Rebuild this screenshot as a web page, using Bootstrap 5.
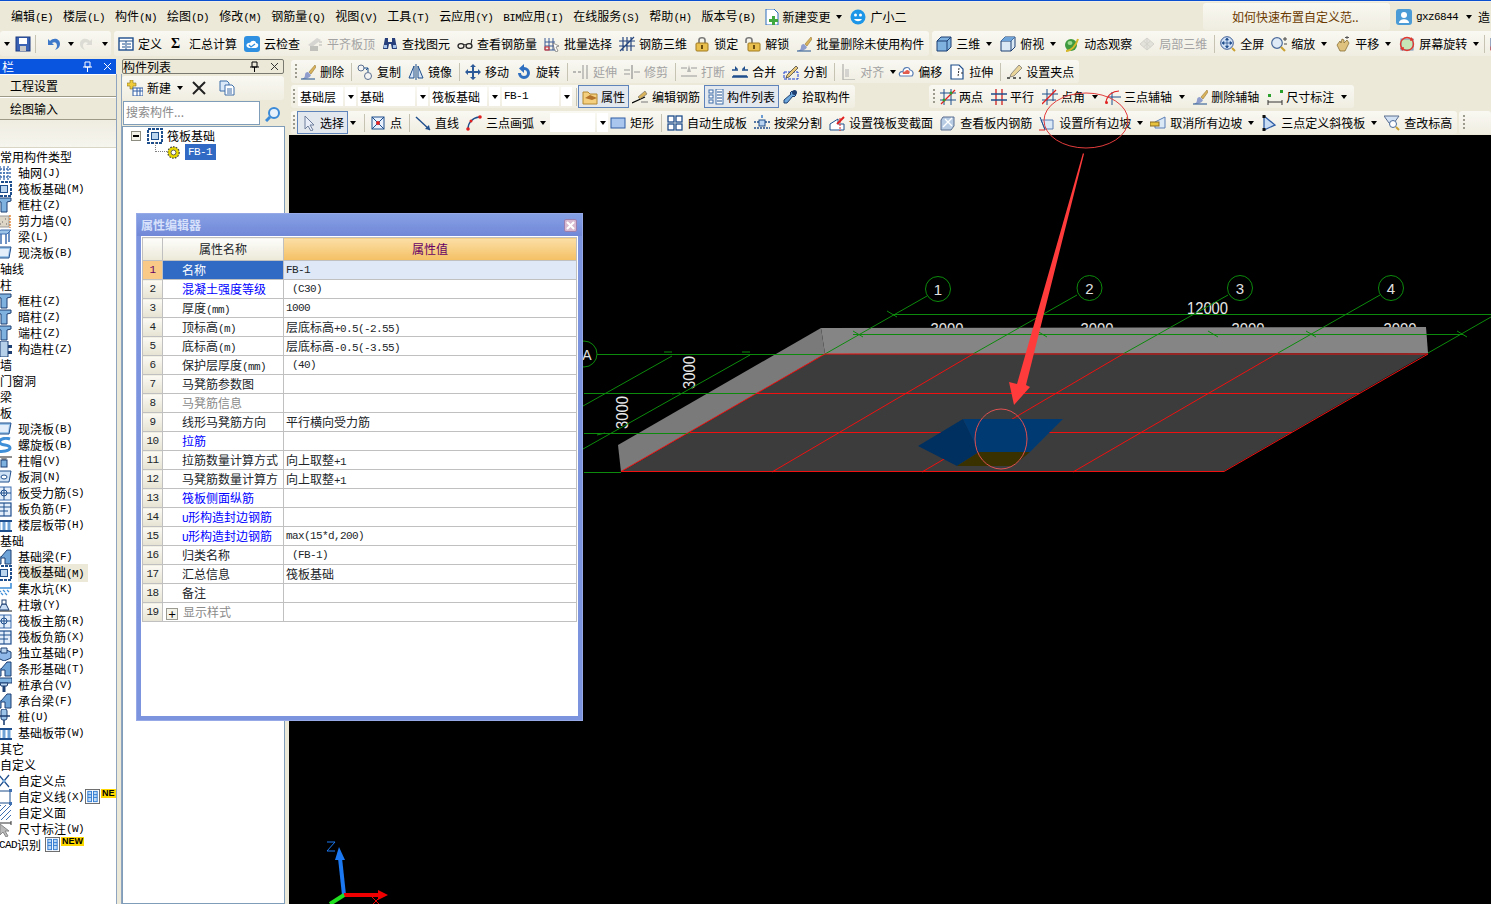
<!DOCTYPE html>
<html lang="zh-CN">
<head>
<meta charset="UTF-8" />
<title>筏板基础 - 属性编辑器</title>
<link href="https://cdn.jsdelivr.net/npm/bootstrap@5.3.0/dist/css/bootstrap.min.css" rel="stylesheet" />
<style>
  html, body { margin: 0; height: 100%; overflow: hidden; background: #ece9d8; }
  body { font: 12px/16px "Noto Sans CJK SC", "Liberation Sans", sans-serif; color: #000; }
  .app-root { position: relative; width: 1491px; height: 904px; overflow: hidden; background: #ece9d8; }
  .hk { font: 11px/16px "Liberation Mono", monospace; letter-spacing: -.6px; }
  .lat { font: 11px/16px "Liberation Mono", monospace; letter-spacing: -.6px; }

  /* menu */
  .top-line { height: 2px; background: linear-gradient(#0a4fd0 50%, #f2f0e6 50%); flex: none; }
  .menu-row { height: 29px; flex: none; padding-left: 6px; white-space: nowrap; }
  .menu-it { padding: 0 5px; }
  .tip-box { width: 187px; height: 27px; margin-left: auto; margin-right: 6px; padding-left: 29px; line-height: 27px; color: #6b3a00; background: linear-gradient(#f9f8f1, #efede0); border-radius: 3px; }
  .user-box { width: 95px; flex: none; gap: 4px; }

  /* toolbars */
  .tb-row { height: 25px; flex: none; white-space: nowrap; gap: 3px; overflow: hidden; }
  .tb-grp { height: 100%; flex: none; background: linear-gradient(#f9f8f2, #f0eee2); border-radius: 3px; }
  .tb-grp > :last-child { margin-right: 5px; }
  .tb-first { width: 111px; overflow: hidden; }
  .it { display: inline-flex; align-items: center; gap: 4px; margin-right: 7px; flex: none; }
  .it-g2 { gap: 2px; }
  .ic { width: 16px; height: 16px; flex: none; display: block; }
  .off { color: #a3a3a3; }
  .off .ic { opacity: .55; }
  .dn { width: 0; height: 0; flex: none; border: 3.5px solid transparent; border-top: 4px solid #000; border-bottom: 0; margin: 0 8px 0 -1px; }
  .dn.dn-s { margin-right: 5px; }
  .dn.dn-t { margin-right: 2px; }
  .sp { width: 1px; height: 18px; flex: none; background: #c6c3b2; margin: 0 5px 0 0; }
  .sp-cmb { margin: 0 1px 0 2px; }
  .hd { width: 2px; height: 16px; flex: none; margin: 0 3px 0 4px; background: repeating-linear-gradient(#9d9b8e 0 2px, transparent 2px 4px); }
  .hd-n { margin: 0 3px 0 2px; }
  .hd-w { margin-right: 5px; }
  .hd-c { margin: 0 2px 0 2px; }
  .hl { height: 23px; padding: 0 3px; margin-right: 3px; gap: 3px; background: #e3e7ee; border: 1px solid #5f83bb; }
  .hl-r { margin-right: 4px; }
  .sum-sign { width: 10px; font: bold 14px/16px "Liberation Serif", serif; margin-left: 2px; margin-right: 4px; }

  .tb-stack { flex: none; padding: 4px 0 0 2px; }
  .tb-a, .tb-b, .tb-c { height: 23px; white-space: nowrap; overflow: hidden; gap: 0; }
  .tb-b { margin-top: 2px; }
  .tb-c { margin-top: 3px; margin-bottom: 1px; }
  .tb-c .dn { margin-right: 7px; }
  .tb-c .dn.dn-w { margin-right: 8px; }
  .tb-c .dn.dn-t { margin-right: 4px; }
  .tb-far { margin-left: 74px; }
  .g3 .it { gap: 3px; margin-right: 8px; }
  .g3 .dn { margin-right: 7px; }
  .tb-tail { margin-left: 2px; width: 32px; }
  .cmb { display: flex; height: 19px; margin-right: 2px; flex: none; }
  .cmb-f { background: #fff; padding-left: 2px; line-height: 19px; margin-right: 2px; }
  .cmb-a { width: 11px; background: #fff; display: flex; align-items: center; justify-content: center; }
  .cmb-a .dn, .tb-c .cmb-a .dn { margin: 0; }
  .w45 { width: 45px; }
  .w58 { width: 57px; }

  /* left panels */
  .side-l { width: 116px; flex: none; padding-top: 3px; overflow: hidden; }
  .pane-hd { height: 15px; display: flex; align-items: center; flex: none; white-space: nowrap; overflow: hidden; }
  .pane-blue { background: #0a55e0; color: #fff; padding-left: 2px; }
  .pane-gray { border: 1px solid #7a7a70; background: #ece9d8; border-radius: 2px; margin-right: 1px; }
  .pin { margin-left: auto; display: flex; gap: 9px; padding-right: 3px; }
  .pin svg { width: 11px; height: 11px; display: block; }
  .side-btn { display: block; width: 100%; height: 23px; padding: 0 0 0 10px; font-size: 12px; line-height: 21px; text-align: left; border: 0; border-bottom: 1px solid #9d9a88; border-top: 1px solid #fff; border-radius: 0; background: #ece9d8; color: #000; }
  .side-fill { height: 28px; background: linear-gradient(#efede1, #f6f5ee); border-bottom: 1px solid #d8d5c4; }
  .type-list { background: #fff; height: 760px; padding-top: 1px; margin: 0; overflow: hidden; }
  .type-row { height: 16px; display: flex; align-items: center; white-space: nowrap; }
  .type-row .ic { margin-left: -4px; margin-right: 6px; }
  .type-on { background: #ece9d8; width: 70px; }
  .new-tag { display: inline-block; height: 9px; padding: 0 1px; overflow: hidden; background: #ffd800; font: bold 9px/9px "Liberation Sans", sans-serif; align-self: flex-start; }
  .col3 { width: 15px; height: 15px; margin: 0 1px 0 1px; flex: none; }
  .cad-row { margin-left: -1px; }

  .split-v { width: 6px; flex: none; background: #ece9d8; border-left: 1px solid #8fa5bf; border-right: 1px solid #8fa5bf; margin-top: 18px; }
  .side-m { width: 163px; flex: none; padding-top: 3px; }
  .side-gap { width: 4px; flex: none; background: #ece9d8; }
  .new-bar { height: 24px; margin-top: 2px; padding-left: 5px; background: linear-gradient(#f9f8f2, #f0eee2); border-radius: 3px; margin-right: 1px; flex: none; }
  .search-row { height: 25px; gap: 2px; margin: 1px 1px 0 1px; flex: none; }
  .search-in { width: 137px; height: 24px; border: 1px solid #7f9db9; background: #fff; color: #8a8a8a; padding: 0 2px 3px; line-height: 16px; border-radius: 0; font-size: 12px; }
  .search-btn { width: 22px; display: flex; align-items: center; justify-content: center; }
  .tree-box { flex-grow: 1; background: #fff; border: 1px solid #7f9db9; position: relative; }
  .tree-line { height: 16px; display: flex; align-items: center; white-space: nowrap; }
  .tree-root { padding: 0 0 0 8px; height: 17px; }
  .tree-sign { width: 10px; height: 10px; border: 1px solid #8c8c80; background: #f4f3ea; margin-right: 6px; position: relative; flex: none; }
  .tree-sign::after { content: ""; position: absolute; left: 1px; right: 1px; top: 3px; height: 2px; background: #000; }
  .tree-leaf { padding-left: 44px; gap: 5px; }
  .tree-leaf .ic { width: 13px; height: 13px; }
  .tree-on { background: #316ac5; color: #fff; padding: 0 2px 0 3px; height: 16px; width: 31px; line-height: 16px; }
  .tree-dots { position: absolute; left: 32px; top: 15px; width: 12px; height: 10px; border-left: 1px dotted #808080; border-bottom: 1px dotted #808080; }
  .main-col { flex: 1 1 0; min-width: 0; }
  .cad-view { flex: 1 1 0; background: #000; min-height: 0; }
  .cad-view svg { display: block; }

  /* property dialog, floats over the view */
  .prop-dlg { position: absolute; left: 136px; top: 213px; width: 447px; height: 508px; border: 0; border-radius: 0; background: #7c93dd; box-shadow: inset 0 0 0 1px #97a9e6; padding: 0 5px 5px; z-index: 5; }
  .prop-title { height: 22px; display: flex; align-items: center; background: linear-gradient(#86a0e4, #7188d8); margin: 1px -4px 0; padding: 0 4px; color: #d6e0fa; font-weight: 700; font-size: 12px; flex: none; }
  .prop-x { width: 13px; height: 13px; margin-left: auto; margin-right: 1px; background: #d8b9cf; border: 1px solid #9b7fae; border-radius: 2px; display: flex; align-items: center; justify-content: center; }
  .prop-body { background: #fff; flex-grow: 1; padding: 1px 0 0 1px; }
  .prop-tb { table-layout: fixed; width: 435px; font-size: 12px; --bs-table-border-color: #c0c0c0; --bs-border-color: #c0c0c0; border-color: #c0c0c0; }
  .prop-tb > :not(caption) > * > * { padding: 0; height: 19px; line-height: 14px; white-space: nowrap; overflow: hidden; box-shadow: none; vertical-align: middle; }
  .prop-tb .lat, .prop-tb .hk { line-height: 12px; }
  .prop-tb thead th { height: 23px; font-weight: 400; text-align: center; border-top-width: 1px; background: linear-gradient(#fdfdfb, #ece9d8); }
  .prop-tb thead th.val-head { background: linear-gradient(#fbdfa6, #f4c063); color: #660066; }
  .prop-tb td.idx { text-align: center; background: linear-gradient(#fbfaf4, #e6e3d3); }
  .prop-tb td.idx-on { background: #f8c987; color: #660066; }
  .prop-tb td.nm { padding-left: 19px; }
  .prop-tb td.nm-on { background: #316ac5; color: #fff; }
  .prop-tb td.vl { padding-left: 2px; }
  .prop-tb td.vl-on { background: #dfe8f6; }
  .prop-tb .lnk { color: #0000ff; }
  .prop-tb .dim { color: #8a8a8a; }
  .plus-box { display: inline-block; width: 12px; height: 12px; margin: 0 5px 0 -16px; border: 1px solid #9a9a90; background: #f4f3ea; line-height: 10px; text-align: center; vertical-align: -2px; font-size: 13px; color: #000; }
  .anno-layer { position: absolute; left: 0; top: 0; z-index: 8; pointer-events: none; }
</style>
</head>
<body>

<svg width="0" height="0" class="position-absolute">
  <defs>
    <symbol id="save" viewBox="0 0 16 16"><rect x="1" y="1" width="14" height="14" fill="#3a62b5" stroke="#1c3a80"/><rect x="4" y="2" width="8" height="6" fill="#fff"/><rect x="5" y="10" width="6" height="5" fill="#c8c8c8"/></symbol>
    <symbol id="undo" viewBox="0 0 16 16"><path d="M3 3v6h6L7 7c3-2 5 0 5 3 0 1-1 3-2 4 3-1 5-3 5-6 0-5-6-7-10-3z" fill="#3e78c8"/></symbol>
    <symbol id="redo" viewBox="0 0 16 16"><path d="M13 3v6H7l2-2c-3-2-5 0-5 3 0 1 1 3 2 4-3-1-5-3-5-6 0-5 6-7 10-3z" fill="#c9c9c4"/></symbol>
    <symbol id="defn" viewBox="0 0 16 16"><rect x="1" y="2" width="14" height="12" fill="#fff" stroke="#1f4e8c" stroke-width="1.4"/><path d="M1 5h14M4 8h3M4 11h3M9 8h4M9 11h4M8 5v9" stroke="#1f4e8c"/></symbol>
    <symbol id="cloud" viewBox="0 0 16 16"><rect x="0" y="0" width="16" height="16" rx="3" fill="#2f8fe0"/><path d="M3 11c-2-3 2-5 3-4 1-3 6-3 6 0 3 0 3 4 0 5H5z" fill="#fff"/><path d="M5 9l2 2 4-3" stroke="#2f8fe0" fill="none" stroke-width="1.3"/></symbol>
    <symbol id="flat" viewBox="0 0 16 16"><path d="M1 9l9-7 4 2-9 7z" fill="#bdbdbd"/><path d="M3 10v5h8v-5" fill="#9a9a9a"/><path d="M12 6h3M12 9h3" stroke="#8a8a8a"/></symbol>
    <symbol id="bino" viewBox="0 0 16 16"><path d="M3 2h3v4h4V2h3l2 11h-5l-1-5H7l-1 5H1z" fill="#27407c"/><rect x="2" y="9" width="3" height="3" fill="#a7c4ea"/><rect x="11" y="9" width="3" height="3" fill="#a7c4ea"/></symbol>
    <symbol id="glass" viewBox="0 0 16 16"><ellipse cx="4" cy="10" rx="3" ry="2.4" fill="none" stroke="#222" stroke-width="1.3"/><ellipse cx="12" cy="10" rx="3" ry="2.4" fill="none" stroke="#222" stroke-width="1.3"/><path d="M7 9c1-1 1-1 2 0M14 8l1-5" stroke="#222" fill="none"/></symbol>
    <symbol id="bsel" viewBox="0 0 16 16"><path d="M1 2v12h10M1 6h10M1 10h10M5 2v12M9 2v12" stroke="#3a5a94" fill="none"/><path d="M9 7l6 3-3 1 2 4-2 1-2-4z" fill="#fff" stroke="#555" stroke-width=".6"/><rect x="1" y="11" width="4" height="3" fill="none" stroke="#d33"/></symbol>
    <symbol id="bar3" viewBox="0 0 16 16"><path d="M4 1v14M8 1v14M12 1v14M0 5h16M0 10h16M1 15l14-14" stroke="#25457e" fill="none" stroke-width="1.2"/></symbol>
    <symbol id="lock" viewBox="0 0 16 16"><path d="M5 7V4c0-3 6-3 6 0v3" fill="none" stroke="#777" stroke-width="1.6"/><rect x="2" y="7" width="12" height="8" rx="1" fill="#e9bf4e" stroke="#a07a20"/><rect x="7" y="9" width="2" height="4" fill="#6a4d10"/></symbol>
    <symbol id="unlock" viewBox="0 0 16 16"><path d="M1 7V4c0-3 6-3 6 0v3" fill="none" stroke="#777" stroke-width="1.6"/><rect x="3" y="7" width="12" height="8" rx="1" fill="#e9bf4e" stroke="#a07a20"/><rect x="8" y="9" width="2" height="4" fill="#6a4d10"/></symbol>
    <symbol id="brush" viewBox="0 0 16 16"><path d="M15 1l-6 7 2 2 5-7z" fill="#d9b25c" stroke="#8a6a24" stroke-width=".5"/><path d="M8 8l3 3c-1 3-5 4-9 4 2-1 3-2 3-4 0-2 1-3 3-3z" fill="#8f9dcc"/><path d="M1 15h14" stroke="#1f4e8c"/></symbol>
    <symbol id="cube" viewBox="0 0 16 16"><path d="M1 5l4-4h10v10l-4 4H1z" fill="#7fb2df" stroke="#1d3f72"/><path d="M1 5h10v10M11 5l4-4" fill="none" stroke="#1d3f72"/></symbol>
    <symbol id="top" viewBox="0 0 16 16"><path d="M1 5l4-4h10v10l-4 4H1z" fill="#dbe9f5" stroke="#1d3f72"/><path d="M1 5h10v10M11 5l4-4" fill="none" stroke="#1d3f72"/><path d="M5 1h10L11 5H1z" fill="#6ea3d8"/></symbol>
    <symbol id="orbit" viewBox="0 0 16 16"><circle cx="7" cy="9" r="6" fill="#3f9a3f"/><ellipse cx="6" cy="7" rx="2.5" ry="2" fill="#9ddc8f"/><path d="M2 15c5 0 10-5 12-12" fill="none" stroke="#d4b72b" stroke-width="2"/></symbol>
    <symbol id="loc3" viewBox="0 0 16 16"><path d="M1 8l7-6 7 6-7 6z" fill="#d5d5d0" stroke="#b9b9b4"/><path d="M4.500 5l7 6M11.500 5l-7 6M8 2v12" stroke="#b9b9b4"/></symbol>
    <symbol id="zfull" viewBox="0 0 16 16"><circle cx="7" cy="7" r="6.300" fill="#cfe0f4" stroke="#3b5a94"/><path d="M7 2v10M2 7h10M7 2L5.500 4h3zM7 12l-1.500-2h3zM2 7l2-1.500v3zM12 7l-2-1.500v3z" stroke="#1f4e8c" fill="#1f4e8c" stroke-width=".7"/><path d="M12 12l3 3" stroke="#caa233" stroke-width="2"/></symbol>
    <symbol id="zoom" viewBox="0 0 16 16"><circle cx="6" cy="7" r="5.300" fill="#dfeaf7" stroke="#4a6a9a" stroke-width="1.200"/><path d="M10 11l4 4" stroke="#caa233" stroke-width="2.200"/><path d="M12 3h4M14 1v4M13 8h3" stroke="#444"/></symbol>
    <symbol id="pan" viewBox="0 0 16 16"><path d="M2 9l3-4 1 2 1-4 2 1v3l3-3 2 3-2 4-2 4H5z" fill="#e0c27f" stroke="#7d6326" stroke-width=".7"/><path d="M12 3V0M10 1.500h4" stroke="#555"/></symbol>
    <symbol id="srot" viewBox="0 0 16 16"><rect x="2" y="3" width="12" height="11" fill="#c7e7b6" stroke="#6c8db8"/><circle cx="8" cy="8" r="6.500" fill="none" stroke="#e03a30" stroke-width="1.400"/><path d="M12 1l3 3-4 1zM4 15l-3-3 4-1z" fill="#e03a30"/></symbol>
    <symbol id="copy2" viewBox="0 0 16 16"><circle cx="4" cy="4" r="3" fill="#f4f4f4" stroke="#5a6f8f"/><circle cx="11" cy="12" r="3.500" fill="#f4f4f4" stroke="#5a6f8f"/><path d="M7 4h4v4M9 6l2-2" fill="none" stroke="#1f4e8c"/></symbol>
    <symbol id="mirror" viewBox="0 0 16 16"><path d="M6 2L1 14h5zM10 2l5 12h-5z" fill="#d9e6f5" stroke="#1f4e8c"/><path d="M8 0v16" stroke="#1f4e8c"/></symbol>
    <symbol id="move" viewBox="0 0 16 16"><path d="M8 0l3 3H9v4h4V5l3 3-3 3V9H9v4h2l-3 3-3-3h2V9H3v2L0 8l3-3v2h4V3H5z" fill="#2d5a98"/></symbol>
    <symbol id="rot" viewBox="0 0 16 16"><path d="M8 3a6 6 0 1 1-6 6h3a3 3 0 1 0 3-3v3L3 4.500 8 0z" fill="#2f6fc0"/></symbol>
    <symbol id="ext" viewBox="0 0 16 16"><path d="M0 8h3M5 8h3" stroke="#888" stroke-width="2"/><path d="M10 1v14M14 1v14" stroke="#888" stroke-width="1.600"/></symbol>
    <symbol id="trim" viewBox="0 0 16 16"><path d="M0 6h6M0 10h6M10 8h6" stroke="#888" stroke-width="1.600"/><path d="M8 1v14" stroke="#888" stroke-width="2"/></symbol>
    <symbol id="brk" viewBox="0 0 16 16"><path d="M0 4h6M10 4h6M0 12h16" stroke="#888" stroke-width="1.600"/><path d="M8 1L6 8h4z" fill="#888"/></symbol>
    <symbol id="join" viewBox="0 0 16 16"><path d="M0 13h16M0 6h6M10 6h6M1 12h14" stroke="#1f4e8c" stroke-width="1.300"/><path d="M3 2l3 3-3 1zM13 2l-3 3 3 1z" fill="#1f4e8c"/></symbol>
    <symbol id="cut" viewBox="0 0 16 16"><rect x="1" y="8" width="14" height="7" fill="none" stroke="#1d3fd0" stroke-dasharray="3 1"/><path d="M4 11l9-9 2 2-9 9-3 1z" fill="#e6c676" stroke="#333" stroke-width=".7"/></symbol>
    <symbol id="algn" viewBox="0 0 16 16"><path d="M3 0v16h12" stroke="#888" fill="none" stroke-width="1.400"/><rect x="5" y="5" width="4" height="8" fill="#bbb"/></symbol>
    <symbol id="offs" viewBox="0 0 16 16"><path d="M2 12c-2-3 1-5 3-4 0-5 6-6 7-2 3 0 4 4 2 6z" fill="#fff" stroke="#5a7fb5" stroke-width="1.200"/><path d="M5 10c-1-2 1-3 2-2 0-2 3-3 4-1 1 0 1 2 0 3z" fill="#e35d4f"/></symbol>
    <symbol id="strch" viewBox="0 0 16 16"><path d="M2 1h8l4 4v10H2z" fill="#fff" stroke="#1f4e8c" stroke-width="1.200"/><path d="M10 4l-1 9M12 9h3" stroke="#333" stroke-dasharray="2 1"/></symbol>
    <symbol id="grip" viewBox="0 0 16 16"><path d="M1 14h3M7 14h3M13 14h2" stroke="#333" stroke-width="1.500"/><path d="M5 10L13 1l3 3-8 8-4 1z" fill="#e9d49a" stroke="#555" stroke-width=".6"/></symbol>
    <symbol id="attr" viewBox="0 0 16 16"><path d="M1 3h5l2 2h7v10H1z" fill="#f3cf7f" stroke="#b48830"/><path d="M3 9l5-3 7 3-5 2z" fill="#b4732a"/></symbol>
    <symbol id="ebar" viewBox="0 0 16 16"><path d="M0 14L13 8" stroke="#000" stroke-width="1.200"/><path d="M6 8l7-6 2 3-7 5z" fill="#d9b25c" stroke="#555" stroke-width=".5"/><path d="M9 13h7" stroke="#777"/></symbol>
    <symbol id="lsti" viewBox="0 0 16 16"><rect x="1" y="1" width="4" height="3" fill="#fff" stroke="#3f6fa8"/><rect x="1" y="6" width="4" height="3" fill="#fff" stroke="#3f6fa8"/><rect x="1" y="11" width="4" height="3" fill="#fff" stroke="#3f6fa8"/><rect x="8" y="0" width="7" height="15" fill="#fff" stroke="#3f6fa8"/><path d="M9 3h5M9 6h5M9 9h5M9 12h5" stroke="#1f4e8c"/></symbol>
    <symbol id="drop" viewBox="0 0 16 16"><path d="M10 2l4 4-2 2-1-1-6 7H2v-3l7-6-1-1z" fill="#6fa8dc" stroke="#1d3f72"/><circle cx="12.500" cy="3.500" r="2.500" fill="#1d3f72"/></symbol>
    <symbol id="twop" viewBox="0 0 16 16"><path d="M4 0v16M11 0v16M0 4h16M0 11h16" stroke="#1f4e8c"/><path d="M1 15L15 1" stroke="#e02020" stroke-width="1.200"/><circle cx="11" cy="4" r="1.500" fill="#2ca02c"/><circle cx="4" cy="11" r="1.500" fill="#2ca02c"/></symbol>
    <symbol id="para" viewBox="0 0 16 16"><path d="M5 0v16M11 0v16" stroke="#d02020" stroke-width="1.300"/><path d="M0 5h16M0 11h16" stroke="#1f4e8c" stroke-width="1.300"/></symbol>
    <symbol id="angl" viewBox="0 0 16 16"><path d="M5 0v16M11 0v12M0 5h16M0 11h14" stroke="#1f4e8c"/><path d="M0 15L14 1" stroke="#e02020" stroke-width="1.300"/></symbol>
    <symbol id="thrp" viewBox="0 0 16 16"><path d="M7 3v13M3 8h13" stroke="#1f4e8c"/><path d="M1 13C2 6 8 2 14 2" fill="none" stroke="#e02020" stroke-width="1.200"/><circle cx="1.500" cy="13.500" r="1.500" fill="#e02020"/></symbol>
    <symbol id="dims" viewBox="0 0 16 16"><path d="M1 13h14M1 11v5M15 11v5" stroke="#333"/><rect x="13" y="1" width="3" height="3" fill="#2ca02c"/><rect x="1" y="5" width="3" height="3" fill="#2ca02c"/></symbol>
    <symbol id="curs" viewBox="0 0 16 16"><path d="M4 1v13l3-3 3 5 2-1-3-5h4z" fill="#e9eef8" stroke="#6f7f9c"/></symbol>
    <symbol id="pnt" viewBox="0 0 16 16"><rect x="2" y="2" width="12" height="12" fill="#e8f0fb" stroke="#1f4e8c"/><path d="M2 2l12 12M14 2L2 14" stroke="#1f4e8c"/><circle cx="8" cy="8" r="2" fill="#e02020"/></symbol>
    <symbol id="line" viewBox="0 0 16 16"><path d="M1 2l14 13" stroke="#1f4e8c" stroke-width="1.400"/><path d="M15 15l-5-1 4-4z" fill="#1f4e8c"/></symbol>
    <symbol id="arc" viewBox="0 0 16 16"><path d="M2 14C2 8 6 3 13 2" fill="none" stroke="#1f4e8c" stroke-width="1.400"/><circle cx="2" cy="14" r="1.800" fill="#e02020"/><circle cx="14" cy="2" r="1.800" fill="#e02020"/><circle cx="5" cy="6" r="1.500" fill="#e02020"/></symbol>
    <symbol id="rct" viewBox="0 0 16 16"><rect x="1" y="3" width="14" height="10" fill="#a9c6ee" stroke="#2f5da5"/></symbol>
    <symbol id="auto" viewBox="0 0 16 16"><rect x="1" y="1" width="6" height="6" fill="#fff" stroke="#1f4e8c" stroke-width="1.300"/><rect x="9" y="1" width="6" height="6" fill="#fff" stroke="#1f4e8c" stroke-width="1.300"/><rect x="1" y="9" width="6" height="6" fill="#fff" stroke="#1f4e8c" stroke-width="1.300"/><rect x="9" y="9" width="6" height="6" fill="#fff" stroke="#1f4e8c" stroke-width="1.300"/></symbol>
    <symbol id="bmsp" viewBox="0 0 16 16"><path d="M0 7h5M11 7h5M0 13h16" stroke="#1f4e8c" stroke-width="1.300" stroke-dasharray="2 1"/><rect x="5" y="5" width="6" height="6" fill="#b9d4f1" stroke="#1f4e8c"/><path d="M8 0v3" stroke="#6b9bd2" stroke-width="2"/></symbol>
    <symbol id="vsec" viewBox="0 0 16 16"><path d="M1 9l8-5v5h6v6H1z" fill="#fff" stroke="#1f4e8c"/><path d="M8 9l7-7" stroke="#e02020" stroke-width="2"/><path d="M11 3v13" stroke="#e02020" stroke-dasharray="2 1"/></symbol>
    <symbol id="vbar" viewBox="0 0 16 16"><path d="M3 2h11v9l-3 4H1V5z" fill="#b7cbe3" stroke="#5a6f8f"/><path d="M3 12l9-9M5 4l7 7" stroke="#fff" stroke-width="1.400"/></symbol>
    <symbol id="slop" viewBox="0 0 16 16"><path d="M2 5l12 0v9H6z" fill="#dbe8f6" stroke="#5a7fb5"/><path d="M1 2l5 13" stroke="#1f4e8c"/><path d="M0 15h6" stroke="#e02020"/></symbol>
    <symbol id="csl" viewBox="0 0 16 16"><path d="M5 7l10-5v11H5z" fill="#dbe8f6" stroke="#5a7fb5"/><rect x="0" y="7" width="9" height="4" fill="#e6c23d" stroke="#8a6a24"/></symbol>
    <symbol id="tri3" viewBox="0 0 16 16"><path d="M3 1v14l11-5z" fill="#c8dcf3" stroke="#2f5da5" stroke-width="1.300"/><rect x="1.500" y="0" width="3" height="3" fill="#111"/><rect x="1.500" y="13" width="3" height="3" fill="#111"/></symbol>
    <symbol id="elev" viewBox="0 0 16 16"><path d="M0 1h15l-5 7H5z" fill="#d2e1f3" stroke="#5a6f8f"/><circle cx="9" cy="9" r="3.500" fill="#fff" stroke="#4a6a9a"/><path d="M12 12l3 3" stroke="#caa233" stroke-width="2"/></symbol>
    <symbol id="addn" viewBox="0 0 16 16"><path d="M3 0h3v3h3v3H6v3H3V6H0V3h3z" fill="#f0cc3a" stroke="#8a7420" stroke-width=".6"/><rect x="6" y="8" width="10" height="8" fill="#fff" stroke="#2f5da5"/><path d="M6 11h10M10 8v8M13 8v8" stroke="#2f5da5"/></symbol>
    <symbol id="dcpy" viewBox="0 0 16 16"><path d="M1 1h7l2 2v8H1z" fill="#dbe8f8" stroke="#3f6fa8"/><path d="M6 5h7l2 2v8H6z" fill="#fff" stroke="#3f6fa8"/><path d="M8 9h5M8 11h5M8 13h5" stroke="#3f6fa8"/></symbol>
    <symbol id="find" viewBox="0 0 16 16"><circle cx="9" cy="7" r="5" fill="#e6f1fc" stroke="#3a8ad8" stroke-width="2"/><path d="M5 11l-4 4" stroke="#3a8ad8" stroke-width="3"/></symbol>
    <symbol id="newf" viewBox="0 0 16 16"><path d="M2 0h8l4 4v12H2z" fill="#fff" stroke="#2f6fc0"/><path d="M8 7h3v3h3v3h-3v3H8v-3H5v-3h3z" fill="#3fa83f"/></symbol>
    <symbol id="gxe" viewBox="0 0 16 16"><circle cx="8" cy="8" r="7.500" fill="#1e96e8"/><circle cx="5.500" cy="6" r="1.500" fill="#fff"/><circle cx="10.500" cy="6" r="1.500" fill="#fff"/><path d="M4 10c2 3 6 3 8 0" fill="#fff"/></symbol>
    <symbol id="usr" viewBox="0 0 16 16"><rect width="16" height="16" rx="3" fill="#4a9bd6"/><circle cx="8" cy="6" r="3" fill="#fff"/><path d="M3 14c0-5 10-5 10 0z" fill="#fff"/></symbol>
    <symbol id="gear" viewBox="0 0 16 16"><circle cx="8" cy="8" r="7" fill="#e6d700" stroke="#444" stroke-dasharray="2 1.500" stroke-width="1.500"/><circle cx="8" cy="8" r="3" fill="#fff" stroke="#444"/></symbol>
    <symbol id="raft" viewBox="0 0 16 16"><rect x="1" y="1" width="14" height="14" fill="#fff" stroke="#1f4e8c" stroke-width="2" stroke-dasharray="3 1"/><rect x="4.500" y="4.500" width="7" height="7" fill="#bcd6f0" stroke="#1f4e8c"/></symbol>
    <symbol id="grd" viewBox="0 0 16 16"><path d="M4 1v14M8 1v14M12 1v14M1 4h14M1 8h14M1 12h14" stroke="#3e6fb0" stroke-dasharray="2 1" stroke-width="1.300"/></symbol>
    <symbol id="colt" viewBox="0 0 16 16"><path d="M1 1h14v3l-4 1v10H5V5L1 4z" fill="#7fb2df" stroke="#1d3f72"/></symbol>
    <symbol id="wall" viewBox="0 0 16 16"><rect x="0" y="3" width="13" height="11" fill="#ddd5c6" stroke="#999"/><path d="M2 6h1M6 9h1M4 11h1M9 6h1M10 11h1" stroke="#666"/><path d="M14 2v13" stroke="#e07820" stroke-dasharray="2 1" stroke-width="1.300"/></symbol>
    <symbol id="beam" viewBox="0 0 16 16"><path d="M1 3l4-2h10l-4 4H4z" fill="#9cc3e8" stroke="#3e6fb0"/><path d="M5 5v10M10 5v10M13 3v10" stroke="#3e6fb0" stroke-width="1.500"/></symbol>
    <symbol id="slab" viewBox="0 0 16 16"><path d="M3 2h12l-2 11H1z" fill="#9cc3e8" stroke="#1f4e8c"/><path d="M3 4h10l-1 7H2z" fill="#e3eefa"/></symbol>
    <symbol id="ccol" viewBox="0 0 16 16"><rect x="4" y="0" width="8" height="16" fill="#b7d0ea" stroke="#1d3f72"/><path d="M0 4h4v3H0zM12 4h4v3h-4zM0 10h4v3H0zM12 10h4v3h-4z" fill="#1d3f72"/></symbol>
    <symbol id="sprl" viewBox="0 0 16 16"><path d="M14 2C8 0 2 3 4 6c2 3 10 1 10 5 0 3-8 4-13 3" fill="none" stroke="#3e8ed8" stroke-width="3"/></symbol>
    <symbol id="ccap" viewBox="0 0 16 16"><path d="M0 3h16v2H11l-1 2H6L5 5H0z" fill="#8f8f8f"/><rect x="5" y="7" width="6" height="7" fill="#7fb2df" stroke="#1d3f72"/></symbol>
    <symbol id="hole" viewBox="0 0 16 16"><path d="M3 2h12l-2 11H1z" fill="#cfe1f5" stroke="#1f4e8c"/><ellipse cx="8" cy="8" rx="3" ry="2" fill="#fff" stroke="#1f4e8c"/></symbol>
    <symbol id="rbar" viewBox="0 0 16 16"><rect x="1" y="2" width="14" height="13" fill="#e3eefa" stroke="#3e6fb0"/><path d="M8 2v13M1 8h14" stroke="#1f4e8c"/><circle cx="8" cy="8" r="3" fill="none" stroke="#1f4e8c"/></symbol>
    <symbol id="rneg" viewBox="0 0 16 16"><rect x="1" y="2" width="14" height="13" fill="#e3eefa" stroke="#1f4e8c" stroke-width="1.200"/><path d="M1 6h14M8 2v13M4 10h8" stroke="#1f4e8c"/></symbol>
    <symbol id="band" viewBox="0 0 16 16"><rect x="0" y="3" width="16" height="2" fill="#1f4e8c"/><path d="M3 5v9M8 5v9M13 5v9" stroke="#6ea3d8" stroke-width="3"/><rect x="0" y="13" width="16" height="2" fill="#1f4e8c"/></symbol>
    <symbol id="fbm" viewBox="0 0 16 16"><path d="M0 15V9l5-1 6-7h4v14H9V9H5v6z" fill="#6ea3d8" stroke="#1d3f72"/></symbol>
    <symbol id="sump" viewBox="0 0 16 16"><path d="M1 2v5h14V2" fill="none" stroke="#3e8ed8" stroke-width="1.600"/><path d="M3 9l2 2M7 9l2 2M11 9l2 2M5 12l2 2M9 12l2 2" stroke="#3e8ed8" stroke-width="1.200"/></symbol>
    <symbol id="pier" viewBox="0 0 16 16"><path d="M0 13h16v2H0z" fill="#888"/><path d="M3 13l3-6h4l3 6z" fill="#c8dcf3" stroke="#1d3f72"/><rect x="6" y="3" width="4" height="4" fill="#fff" stroke="#1d3f72"/></symbol>
    <symbol id="isof" viewBox="0 0 16 16"><path d="M2 8l6-4 7 3v6l-7 3-6-3z" fill="#8fb8e8" stroke="#1d3f72"/><path d="M5 3h6v5H5z" fill="#bcd6f0" stroke="#1d3f72"/></symbol>
    <symbol id="pile" viewBox="0 0 16 16"><rect x="5" y="0" width="6" height="11" rx="2" fill="#9cc3e8" stroke="#1d3f72"/><path d="M2 7h12M8 11v5" stroke="#1d3f72" stroke-width="1.600"/></symbol>
    <symbol id="pcap" viewBox="0 0 16 16"><rect x="0" y="1" width="16" height="5" fill="#7fb2df" stroke="#1d3f72"/><path d="M4 6h8l-1 3H5z" fill="#bcd6f0" stroke="#1d3f72"/><path d="M8 9v6" stroke="#1d3f72" stroke-width="3"/></symbol>
    <symbol id="cpt" viewBox="0 0 16 16"><path d="M3 2l10 12M13 2L3 14" stroke="#1f4e8c" stroke-width="1.300"/><circle cx="8" cy="8" r="1.500" fill="#6ea3d8"/></symbol>
    <symbol id="cln" viewBox="0 0 16 16"><rect x="2" y="2" width="12" height="12" fill="none" stroke="#1f4e8c"/><rect x="0" y="0" width="3" height="3" fill="#3e6fb0"/><rect x="13" y="0" width="3" height="3" fill="#3e6fb0"/><rect x="0" y="13" width="3" height="3" fill="#3e6fb0"/><rect x="13" y="13" width="3" height="3" fill="#3e6fb0"/></symbol>
    <symbol id="car" viewBox="0 0 16 16"><path d="M0 5l5-5M0 10L10 0M0 15L15 0M5 15L15 5M10 15l5-5" stroke="#3e6fb0"/></symbol>
    <symbol id="cdm" viewBox="0 0 16 16"><path d="M1 2h14M1 0v4M15 0v4" stroke="#333"/><path d="M4 3v11l3-3 3 5 2-1-3-5h4z" fill="#bbb" stroke="#888"/></symbol>
    <symbol id="c3" viewBox="0 0 16 16"><rect x=".5" y=".5" width="15" height="15" fill="#fff" stroke="#666"/><rect x="3" y="2.500" width="4" height="11" fill="#bcd9f5" stroke="#2f7ad0"/><rect x="9" y="2.500" width="4" height="11" fill="#bcd9f5" stroke="#2f7ad0"/><path d="M3 6h4M3 9h4M9 6h4M9 9h4" stroke="#2f7ad0"/></symbol>
  </defs>
</svg>

<div class="app-root d-flex flex-column">
  <div class="top-line"></div>

  <!-- menu bar -->
  <div class="menu-row d-flex align-items-center">
    <span class="menu-it">编辑<span class="hk">(E)</span></span>
    <span class="menu-it">楼层<span class="hk">(L)</span></span>
    <span class="menu-it">构件<span class="hk">(N)</span></span>
    <span class="menu-it">绘图<span class="hk">(D)</span></span>
    <span class="menu-it">修改<span class="hk">(M)</span></span>
    <span class="menu-it">钢筋量<span class="hk">(Q)</span></span>
    <span class="menu-it">视图<span class="hk">(V)</span></span>
    <span class="menu-it">工具<span class="hk">(T)</span></span>
    <span class="menu-it">云应用<span class="hk">(Y)</span></span>
    <span class="menu-it"><span class="lat">BIM</span>应用<span class="hk">(I)</span></span>
    <span class="menu-it">在线服务<span class="hk">(S)</span></span>
    <span class="menu-it">帮助<span class="hk">(H)</span></span>
    <span class="menu-it">版本号<span class="hk">(B)</span></span>
    <span class="it it-g2 ms-1"><svg class="ic"><use href="#newf"/></svg>新建变更</span>
    <span class="dn"></span>
    <span class="it"><svg class="ic"><use href="#gxe"/></svg>广小二</span>
    <div class="tip-box">如何快速布置自定义范..</div>
    <div class="user-box d-flex align-items-center">
      <svg class="ic"><use href="#usr"/></svg><span class="lat">gxz6844</span><span class="dn dn-t ms-1"></span><span>造</span>
    </div>
  </div>

  <!-- main toolbar -->
  <div class="tb-row d-flex align-items-center">
    <div class="tb-grp tb-first d-flex align-items-center">
      <span class="dn dn-s ms-1"></span>
      <span class="it me-1"><svg class="ic"><use href="#save"/></svg></span>
      <span class="sp"></span>
      <span class="it me-2 ms-1"><svg class="ic"><use href="#undo"/></svg></span>
      <span class="dn dn-s"></span>
      <span class="it me-2 off"><svg class="ic"><use href="#redo"/></svg></span>
      <span class="dn off"></span>
    </div>
    <div class="tb-grp d-flex align-items-center ps-1">
      <span class="it"><svg class="ic"><use href="#defn"/></svg>定义</span>
      <span class="it"><span class="sum-sign">Σ</span>汇总计算</span>
      <span class="it"><svg class="ic"><use href="#cloud"/></svg>云检查</span>
      <span class="it off"><svg class="ic"><use href="#flat"/></svg>平齐板顶</span>
      <span class="it"><svg class="ic"><use href="#bino"/></svg>查找图元</span>
      <span class="it"><svg class="ic"><use href="#glass"/></svg>查看钢筋量</span>
      <span class="it"><svg class="ic"><use href="#bsel"/></svg>批量选择</span>
      <span class="it"><svg class="ic"><use href="#bar3"/></svg>钢筋三维</span>
      <span class="it"><svg class="ic"><use href="#lock"/></svg>锁定</span>
      <span class="it"><svg class="ic"><use href="#unlock"/></svg>解锁</span>
      <span class="it"><svg class="ic"><use href="#brush"/></svg>批量删除未使用构件</span>
    </div>
    <div class="tb-grp d-flex align-items-center ps-1 flex-grow-1">
      <span class="it"><svg class="ic"><use href="#cube"/></svg>三维</span>
      <span class="dn"></span>
      <span class="it"><svg class="ic"><use href="#top"/></svg>俯视</span>
      <span class="dn"></span>
      <span class="it"><svg class="ic"><use href="#orbit"/></svg>动态观察</span>
      <span class="it off"><svg class="ic"><use href="#loc3"/></svg>局部三维</span>
      <span class="sp"></span>
      <span class="it"><svg class="ic"><use href="#zfull"/></svg>全屏</span>
      <span class="it"><svg class="ic"><use href="#zoom"/></svg>缩放</span>
      <span class="dn"></span>
      <span class="it"><svg class="ic"><use href="#pan"/></svg>平移</span>
      <span class="dn"></span>
      <span class="it"><svg class="ic"><use href="#srot"/></svg>屏幕旋转</span>
      <span class="dn dn-s"></span>
      <span class="sp"></span>
      <span class="it"><svg class="ic"><use href="#bsel"/></svg></span>
    </div>
  </div>

  <div class="d-flex flex-grow-1" style="min-height:0">
    <!-- module panel -->
    <div class="side-l d-flex flex-column">
      <div class="pane-hd pane-blue">栏
        <span class="pin">
          <svg viewBox="0 0 11 11"><path d="M3 1h5v5H3zM1 6h9M5.500 6v5" stroke="#fff" fill="none"/></svg>
          <svg viewBox="0 0 11 11"><path d="M2 2l7 7M9 2l-7 7" stroke="#fff"/></svg>
        </span>
      </div>
      <button type="button" class="btn side-btn">工程设置</button>
      <button type="button" class="btn side-btn">绘图输入</button>
      <div class="side-fill"></div>
      <ul class="list-unstyled type-list">
        <li class="type-row">常用构件类型</li>
        <li class="type-row"><svg class="ic"><use href="#grd"/></svg>轴网<span class="hk">(J)</span></li>
        <li class="type-row"><svg class="ic"><use href="#raft"/></svg>筏板基础<span class="hk">(M)</span></li>
        <li class="type-row"><svg class="ic"><use href="#colt"/></svg>框柱<span class="hk">(Z)</span></li>
        <li class="type-row"><svg class="ic"><use href="#wall"/></svg>剪力墙<span class="hk">(Q)</span></li>
        <li class="type-row"><svg class="ic"><use href="#beam"/></svg>梁<span class="hk">(L)</span></li>
        <li class="type-row"><svg class="ic"><use href="#slab"/></svg>现浇板<span class="hk">(B)</span></li>
        <li class="type-row">轴线</li>
        <li class="type-row">柱</li>
        <li class="type-row"><svg class="ic"><use href="#colt"/></svg>框柱<span class="hk">(Z)</span></li>
        <li class="type-row"><svg class="ic"><use href="#colt"/></svg>暗柱<span class="hk">(Z)</span></li>
        <li class="type-row"><svg class="ic"><use href="#colt"/></svg>端柱<span class="hk">(Z)</span></li>
        <li class="type-row"><svg class="ic"><use href="#ccol"/></svg>构造柱<span class="hk">(Z)</span></li>
        <li class="type-row">墙</li>
        <li class="type-row">门窗洞</li>
        <li class="type-row">梁</li>
        <li class="type-row">板</li>
        <li class="type-row"><svg class="ic"><use href="#slab"/></svg>现浇板<span class="hk">(B)</span></li>
        <li class="type-row"><svg class="ic"><use href="#sprl"/></svg>螺旋板<span class="hk">(B)</span></li>
        <li class="type-row"><svg class="ic"><use href="#ccap"/></svg>柱帽<span class="hk">(V)</span></li>
        <li class="type-row"><svg class="ic"><use href="#hole"/></svg>板洞<span class="hk">(N)</span></li>
        <li class="type-row"><svg class="ic"><use href="#rbar"/></svg>板受力筋<span class="hk">(S)</span></li>
        <li class="type-row"><svg class="ic"><use href="#rneg"/></svg>板负筋<span class="hk">(F)</span></li>
        <li class="type-row"><svg class="ic"><use href="#band"/></svg>楼层板带<span class="hk">(H)</span></li>
        <li class="type-row">基础</li>
        <li class="type-row"><svg class="ic"><use href="#fbm"/></svg>基础梁<span class="hk">(F)</span></li>
        <li class="type-row"><svg class="ic"><use href="#raft"/></svg><span class="type-on">筏板基础<span class="hk">(M)</span></span></li>
        <li class="type-row"><svg class="ic"><use href="#sump"/></svg>集水坑<span class="hk">(K)</span></li>
        <li class="type-row"><svg class="ic"><use href="#pier"/></svg>柱墩<span class="hk">(Y)</span></li>
        <li class="type-row"><svg class="ic"><use href="#rbar"/></svg>筏板主筋<span class="hk">(R)</span></li>
        <li class="type-row"><svg class="ic"><use href="#rneg"/></svg>筏板负筋<span class="hk">(X)</span></li>
        <li class="type-row"><svg class="ic"><use href="#isof"/></svg>独立基础<span class="hk">(P)</span></li>
        <li class="type-row"><svg class="ic"><use href="#fbm"/></svg>条形基础<span class="hk">(T)</span></li>
        <li class="type-row"><svg class="ic"><use href="#pcap"/></svg>桩承台<span class="hk">(V)</span></li>
        <li class="type-row"><svg class="ic"><use href="#fbm"/></svg>承台梁<span class="hk">(F)</span></li>
        <li class="type-row"><svg class="ic"><use href="#pile"/></svg>桩<span class="hk">(U)</span></li>
        <li class="type-row"><svg class="ic"><use href="#band"/></svg>基础板带<span class="hk">(W)</span></li>
        <li class="type-row">其它</li>
        <li class="type-row">自定义</li>
        <li class="type-row"><svg class="ic"><use href="#cpt"/></svg>自定义点</li>
        <li class="type-row"><svg class="ic"><use href="#cln"/></svg>自定义线<span class="hk">(X)</span><svg class="col3"><use href="#c3"/></svg><span class="new-tag">NE</span></li>
        <li class="type-row"><svg class="ic"><use href="#car"/></svg>自定义面</li>
        <li class="type-row"><svg class="ic"><use href="#cdm"/></svg>尺寸标注<span class="hk">(W)</span></li>
        <li class="type-row cad-row"><span class="hk">CAD</span>识别<svg class="col3 ms-1"><use href="#c3"/></svg><span class="new-tag">NEW</span></li>
      </ul>
    </div>

    <div class="split-v"></div>

    <!-- component list -->
    <div class="side-m d-flex flex-column">
      <div class="pane-hd pane-gray">构件列表
        <span class="pin">
          <svg viewBox="0 0 11 11"><path d="M3 1h5v5H3zM1 6h9M5.500 6v5" stroke="#000" fill="none"/></svg>
          <svg viewBox="0 0 11 11"><path d="M2 2l7 7M9 2l-7 7" stroke="#333"/></svg>
        </span>
      </div>
      <div class="new-bar d-flex align-items-center">
        <span class="it"><svg class="ic"><use href="#addn"/></svg>新建</span>
        <span class="dn me-2"></span>
        <svg class="ic me-2" viewBox="0 0 16 16"><path d="M2 2l12 12M14 2L2 14" stroke="#222" stroke-width="2"/></svg>
        <svg class="ic ms-1"><use href="#dcpy"/></svg>
      </div>
      <div class="search-row d-flex">
        <input class="form-control search-in" value="搜索构件..." readonly />
        <span class="search-btn"><svg class="ic"><use href="#find"/></svg></span>
      </div>
      <div class="tree-box">
        <div class="tree-line tree-root"><span class="tree-sign"></span><svg class="ic"><use href="#raft"/></svg><span class="ms-1">筏板基础</span></div>
        <div class="tree-dots"></div>
        <div class="tree-line tree-leaf"><svg class="ic"><use href="#gear"/></svg><span class="tree-on lat">FB-1</span></div>
      </div>
    </div>
    <div class="side-gap"></div>

    <!-- drawing area -->
    <div class="main-col d-flex flex-column">
      <div class="tb-stack">
        <div class="tb-a d-flex">
          <div class="tb-grp d-flex align-items-center">
            <span class="hd"></span>
            <span class="it"><svg class="ic"><use href="#brush"/></svg>删除</span>
            <span class="sp"></span>
            <span class="it"><svg class="ic"><use href="#copy2"/></svg>复制</span>
            <span class="it"><svg class="ic"><use href="#mirror"/></svg>镜像</span>
            <span class="sp"></span>
            <span class="it"><svg class="ic"><use href="#move"/></svg>移动</span>
            <span class="it"><svg class="ic"><use href="#rot"/></svg>旋转</span>
            <span class="sp"></span>
            <span class="it off"><svg class="ic"><use href="#ext"/></svg>延伸</span>
            <span class="it off"><svg class="ic"><use href="#trim"/></svg>修剪</span>
            <span class="sp"></span>
            <span class="it off"><svg class="ic"><use href="#brk"/></svg>打断</span>
            <span class="it"><svg class="ic"><use href="#join"/></svg>合并</span>
            <span class="it"><svg class="ic"><use href="#cut"/></svg>分割</span>
            <span class="sp"></span>
            <span class="it off"><svg class="ic"><use href="#algn"/></svg>对齐</span>
            <span class="dn dn-t off"></span>
            <span class="it"><svg class="ic"><use href="#offs"/></svg>偏移</span>
            <span class="it"><svg class="ic"><use href="#strch"/></svg>拉伸</span>
            <span class="sp"></span>
            <span class="it"><svg class="ic"><use href="#grip"/></svg>设置夹点</span>
          </div>
        </div>
        <div class="tb-b d-flex">
          <div class="tb-grp d-flex align-items-center">
            <span class="hd hd-n"></span>
            <span class="cmb"><span class="cmb-f w45">基础层</span><span class="cmb-a"><span class="dn"></span></span></span>
            <span class="cmb"><span class="cmb-f w58">基础</span><span class="cmb-a"><span class="dn"></span></span></span>
            <span class="cmb"><span class="cmb-f w58">筏板基础</span><span class="cmb-a"><span class="dn"></span></span></span>
            <span class="cmb"><span class="cmb-f w58 lat">FB-1</span><span class="cmb-a"><span class="dn"></span></span></span>
            <span class="sp sp-cmb"></span>
            <span class="it hl"><svg class="ic"><use href="#attr"/></svg>属性</span>
            <span class="it hl-r"><svg class="ic"><use href="#ebar"/></svg>编辑钢筋</span>
            <span class="it hl"><svg class="ic"><use href="#lsti"/></svg>构件列表</span>
            <span class="it"><svg class="ic"><use href="#drop"/></svg>拾取构件</span>
          </div>
          <div class="tb-grp tb-far g3 d-flex align-items-center">
            <span class="hd hd-w"></span>
            <span class="it"><svg class="ic"><use href="#twop"/></svg>两点</span>
            <span class="it"><svg class="ic"><use href="#para"/></svg>平行</span>
            <span class="it"><svg class="ic"><use href="#angl"/></svg>点角</span>
            <span class="dn"></span>
            <span class="it"><svg class="ic"><use href="#thrp"/></svg>三点辅轴</span>
            <span class="dn"></span>
            <span class="it"><svg class="ic"><use href="#brush"/></svg>删除辅轴</span>
            <span class="it"><svg class="ic"><use href="#dims"/></svg>尺寸标注</span>
            <span class="dn"></span>
          </div>
        </div>
        <div class="tb-c d-flex">
          <div class="tb-grp d-flex align-items-center">
            <span class="hd hd-c"></span>
            <span class="it hl"><svg class="ic"><use href="#curs"/></svg>选择</span>
            <span class="dn dn-w"></span>
            <span class="sp"></span>
            <span class="it"><svg class="ic"><use href="#pnt"/></svg>点</span>
            <span class="sp"></span>
            <span class="it"><svg class="ic"><use href="#line"/></svg>直线</span>
            <span class="it"><svg class="ic"><use href="#arc"/></svg>三点画弧</span>
            <span class="dn dn-t"></span>
            <span class="cmb"><span class="cmb-f w45"></span><span class="cmb-a"><span class="dn"></span></span></span>
            <span class="it"><svg class="ic"><use href="#rct"/></svg>矩形</span>
            <span class="sp"></span>
            <span class="it"><svg class="ic"><use href="#auto"/></svg>自动生成板</span>
            <span class="it"><svg class="ic"><use href="#bmsp"/></svg>按梁分割</span>
            <span class="it"><svg class="ic"><use href="#vsec"/></svg>设置筏板变截面</span>
            <span class="it"><svg class="ic"><use href="#vbar"/></svg>查看板内钢筋</span>
            <span class="it"><svg class="ic"><use href="#slop"/></svg>设置所有边坡</span>
            <span class="dn"></span>
            <span class="it"><svg class="ic"><use href="#csl"/></svg>取消所有边坡</span>
            <span class="dn"></span>
            <span class="it"><svg class="ic"><use href="#tri3"/></svg>三点定义斜筏板</span>
            <span class="dn"></span>
            <span class="it"><svg class="ic"><use href="#elev"/></svg>查改标高</span>
          </div>
          <div class="tb-grp tb-tail d-flex align-items-center"><span class="hd"></span></div>
        </div>
      </div>

      <div class="cad-view">
        <svg width="1202" height="769" viewBox="289 135 1202 769" font-family="Liberation Sans, sans-serif">
          <!-- dimension text that the slab hides -->
          <g fill="#e8e8e8" font-size="17" text-anchor="middle">
            <text x="947" y="335" textLength="33" lengthAdjust="spacingAndGlyphs">3000</text>
            <text x="1097" y="335" textLength="33" lengthAdjust="spacingAndGlyphs">3000</text>
            <text x="1248" y="335" textLength="33" lengthAdjust="spacingAndGlyphs">3000</text>
            <text x="1400" y="335" textLength="33" lengthAdjust="spacingAndGlyphs">3000</text>
            <text x="1207.500" y="314" textLength="41" lengthAdjust="spacingAndGlyphs">12000</text>
            <text x="0" y="0" transform="translate(695,372.500) rotate(-90)" textLength="33" lengthAdjust="spacingAndGlyphs">3000</text>
            <text x="0" y="0" transform="translate(627.500,412.500) rotate(-90)" textLength="33" lengthAdjust="spacingAndGlyphs">3000</text>
          </g>
          <!-- slab -->
          <polygon points="821,328 1426,327 1428,353 825,354" fill="#858585"/>
          <polygon points="821,328 825,354 621,472 618,445" fill="#7a7a7a"/>
          <polygon points="825,354 1428,353 1224,471 621,472" fill="#3c3c3c"/>
          <!-- green grid -->
          <g stroke="#0c8a0c" fill="none">
            <path d="M893 314.500H1491M853 334.500H1463M597 354.500H825M584 393.500H757M584 433.500H690M584 472.500H621"/>
            <path d="M927 296L825 354M1077 295L973 354M1228 295L1123 354M1380 295L1278 353M1491 317L1428 353"/>
            <path d="M583 406L672 356M583 449L750 355"/>
            <path d="M887 311l10 6M1037 331l10 6M1208 331l10 6M1306 331l10 6M1457 331l10 6M853 331l10 6M672 352h-8M750 352h-8M680 393l-8 1M605 433l-8 2"/>
            <circle cx="938" cy="289" r="12.500"/>
            <circle cx="1089.500" cy="288" r="12.500"/>
            <circle cx="1240" cy="288" r="12.500"/>
            <circle cx="1391" cy="288" r="12.500"/>
            <circle cx="584" cy="354" r="13"/>
          </g>
          <g fill="#e0e0e0" font-size="15" text-anchor="middle">
            <text x="938" y="294.500">1</text>
            <text x="1089.500" y="293.500">2</text>
            <text x="1240" y="293.500">3</text>
            <text x="1391" y="293.500">4</text>
            <text x="587" y="359.500" font-size="14">A</text>
          </g>
          <!-- red rebar lines -->
          <g stroke="#f01010" fill="none">
            <path d="M825 354H1428L1224 471.500H621Z"/>
            <path d="M757 393.500H1360M690 432.500H1292"/>
            <path d="M973 354L772 472M1123 354L922 472M1278 353L1073 472"/>
          </g>
          <!-- selected slope face -->
          <polygon points="918,446 963,419 980,452 979,452 957,466" fill="#00305f"/>
          <polygon points="963,419 1063,419 1030,452 979,452" fill="#003a72"/>
          <polygon points="979,452 1030,452 1013,466 957,466" fill="#3a3100"/>
          <!-- axis triad -->
          <path d="M344 895L340 858" stroke="#1c78f0" stroke-width="4"/>
          <polygon points="339,847 335,860 345,860" fill="#1c78f0"/>
          <path d="M344 895H378" stroke="#f00000" stroke-width="4"/>
          <polygon points="388,895 378,890 378,900" fill="#f00000"/>
          <path d="M344 895L330 904" stroke="#20e020" stroke-width="4"/>
          <path d="M327 842h8l-8 9h8" stroke="#1c78f0" fill="none"/>
          <path d="M372 897l8 8M380 897l-8 8" stroke="#f00000" fill="none"/>
        </svg>
      </div>
    </div>
  </div>

  <!-- property editor dialog -->
  <div class="card prop-dlg d-flex flex-column">
    <div class="prop-title">属性编辑器
      <span class="prop-x"><svg width="9" height="9" viewBox="0 0 9 9"><path d="M1 1l7 7M8 1L1 8" stroke="#fff" stroke-width="2"/></svg></span>
    </div>
    <div class="prop-body">
      <table class="table table-bordered prop-tb mb-0">
        <colgroup><col style="width:20px"><col style="width:121px"><col></colgroup>
        <thead>
          <tr><th></th><th>属性名称</th><th class="val-head">属性值</th></tr>
        </thead>
        <tbody>
          <tr><td class="idx idx-on lat">1</td><td class="nm nm-on">名称</td><td class="vl vl-on lat">FB-1</td></tr>
          <tr><td class="idx lat">2</td><td class="nm lnk">混凝土强度等级</td><td class="vl lat">&nbsp;(C30)</td></tr>
          <tr><td class="idx lat">3</td><td class="nm">厚度<span class="hk">(mm)</span></td><td class="vl lat">1000</td></tr>
          <tr><td class="idx lat">4</td><td class="nm">顶标高<span class="hk">(m)</span></td><td class="vl">层底标高<span class="lat">+0.5(-2.55)</span></td></tr>
          <tr><td class="idx lat">5</td><td class="nm">底标高<span class="hk">(m)</span></td><td class="vl">层底标高<span class="lat">-0.5(-3.55)</span></td></tr>
          <tr><td class="idx lat">6</td><td class="nm">保护层厚度<span class="hk">(mm)</span></td><td class="vl lat">&nbsp;(40)</td></tr>
          <tr><td class="idx lat">7</td><td class="nm">马凳筋参数图</td><td class="vl"></td></tr>
          <tr><td class="idx lat">8</td><td class="nm dim">马凳筋信息</td><td class="vl"></td></tr>
          <tr><td class="idx lat">9</td><td class="nm">线形马凳筋方向</td><td class="vl">平行横向受力筋</td></tr>
          <tr><td class="idx lat">10</td><td class="nm lnk">拉筋</td><td class="vl"></td></tr>
          <tr><td class="idx lat">11</td><td class="nm">拉筋数量计算方式</td><td class="vl">向上取整<span class="lat">+1</span></td></tr>
          <tr><td class="idx lat">12</td><td class="nm">马凳筋数量计算方</td><td class="vl">向上取整<span class="lat">+1</span></td></tr>
          <tr><td class="idx lat">13</td><td class="nm lnk">筏板侧面纵筋</td><td class="vl"></td></tr>
          <tr><td class="idx lat">14</td><td class="nm lnk"><span class="lat">U</span>形构造封边钢筋</td><td class="vl"></td></tr>
          <tr><td class="idx lat">15</td><td class="nm lnk"><span class="lat">U</span>形构造封边钢筋</td><td class="vl lat">max(15*d,200)</td></tr>
          <tr><td class="idx lat">16</td><td class="nm">归类名称</td><td class="vl lat">&nbsp;(FB-1)</td></tr>
          <tr><td class="idx lat">17</td><td class="nm">汇总信息</td><td class="vl">筏板基础</td></tr>
          <tr><td class="idx lat">18</td><td class="nm">备注</td><td class="vl"></td></tr>
          <tr><td class="idx lat">19</td><td class="nm dim"><span class="plus-box">+</span>显示样式</td><td class="vl"></td></tr>
        </tbody>
      </table>
    </div>
  </div>

  <!-- hand drawn annotation over toolbar and view -->
  <svg class="anno-layer" width="1491" height="904" viewBox="0 0 1491 904">
    <ellipse cx="1086" cy="120.500" rx="42" ry="27.500" fill="none" stroke="#e23c3c"/>
    <ellipse cx="1001" cy="439" rx="26" ry="30" fill="none" stroke="#e05050"/>
    <polygon points="1083,153 1084,154 1026,385 1030,387 1014,405 1009,382 1017,384" fill="#ff3b3b"/>
  </svg>
</div>

<script src="https://cdn.jsdelivr.net/npm/bootstrap@5.3.0/dist/js/bootstrap.bundle.min.js"></script>
</body>
</html>
